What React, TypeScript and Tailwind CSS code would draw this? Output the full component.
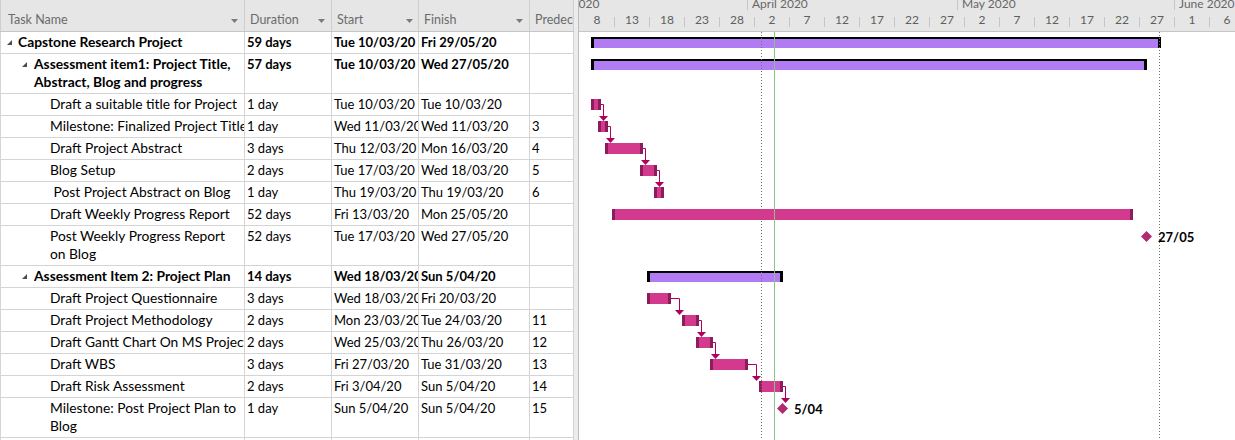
import React from 'react';

type Bar =
  | { kind: 'summary'; s: number; e: number }
  | { kind: 'task'; s: number; e: number }
  | { kind: 'milestone'; e: number; label: string };

type Row = {
  lines: string[];
  lvl: 0 | 1 | 2;
  dur: string;
  start: string;
  finish: string;
  pred: string;
  bold?: boolean;
  bar: Bar;
};

const d = (m: number, day: number) =>
  m === 3 ? day - 8 : m === 4 ? 23 + day : m === 5 ? 53 + day : 84 + day;

const task = (m1: number, d1: number, m2: number, d2: number): Bar => ({ kind: 'task', s: d(m1, d1), e: d(m2, d2) });

const ROWS: Row[] = [
  { lines: ['Capstone Research Project'], lvl: 0, dur: '59 days', start: 'Tue 10/03/20', finish: 'Fri 29/05/20', pred: '', bold: true, bar: { kind: 'summary', s: d(3, 10), e: d(5, 29) } },
  { lines: ['Assessment item1: Project Title,', 'Abstract, Blog and progress'], lvl: 1, dur: '57 days', start: 'Tue 10/03/20', finish: 'Wed 27/05/20', pred: '', bold: true, bar: { kind: 'summary', s: d(3, 10), e: d(5, 27) } },
  { lines: ['Draft a suitable title for Project'], lvl: 2, dur: '1 day', start: 'Tue 10/03/20', finish: 'Tue 10/03/20', pred: '', bar: task(3, 10, 3, 10) },
  { lines: ['Milestone: Finalized Project Title'], lvl: 2, dur: '1 day', start: 'Wed 11/03/20', finish: 'Wed 11/03/20', pred: '3', bar: task(3, 11, 3, 11) },
  { lines: ['Draft Project Abstract'], lvl: 2, dur: '3 days', start: 'Thu 12/03/20', finish: 'Mon 16/03/20', pred: '4', bar: task(3, 12, 3, 16) },
  { lines: ['Blog Setup'], lvl: 2, dur: '2 days', start: 'Tue 17/03/20', finish: 'Wed 18/03/20', pred: '5', bar: task(3, 17, 3, 18) },
  { lines: ['\u00a0Post Project Abstract on Blog'], lvl: 2, dur: '1 day', start: 'Thu 19/03/20', finish: 'Thu 19/03/20', pred: '6', bar: task(3, 19, 3, 19) },
  { lines: ['Draft Weekly Progress Report'], lvl: 2, dur: '52 days', start: 'Fri 13/03/20', finish: 'Mon 25/05/20', pred: '', bar: task(3, 13, 5, 25) },
  { lines: ['Post Weekly Progress Report', 'on Blog'], lvl: 2, dur: '52 days', start: 'Tue 17/03/20', finish: 'Wed 27/05/20', pred: '', bar: { kind: 'milestone', e: d(5, 27), label: '27/05' } },
  { lines: ['Assessment Item 2: Project Plan'], lvl: 1, dur: '14 days', start: 'Wed 18/03/20', finish: 'Sun 5/04/20', pred: '', bold: true, bar: { kind: 'summary', s: d(3, 18), e: d(4, 5) } },
  { lines: ['Draft Project Questionnaire'], lvl: 2, dur: '3 days', start: 'Wed 18/03/20', finish: 'Fri 20/03/20', pred: '', bar: task(3, 18, 3, 20) },
  { lines: ['Draft Project Methodology'], lvl: 2, dur: '2 days', start: 'Mon 23/03/20', finish: 'Tue 24/03/20', pred: '11', bar: task(3, 23, 3, 24) },
  { lines: ['Draft Gantt Chart On MS Project'], lvl: 2, dur: '2 days', start: 'Wed 25/03/20', finish: 'Thu 26/03/20', pred: '12', bar: task(3, 25, 3, 26) },
  { lines: ['Draft WBS'], lvl: 2, dur: '3 days', start: 'Fri 27/03/20', finish: 'Tue 31/03/20', pred: '13', bar: task(3, 27, 3, 31) },
  { lines: ['Draft Risk Assessment'], lvl: 2, dur: '2 days', start: 'Fri 3/04/20', finish: 'Sun 5/04/20', pred: '14', bar: task(4, 3, 4, 5) },
  { lines: ['Milestone: Post Project Plan to', 'Blog'], lvl: 2, dur: '1 day', start: 'Sun 5/04/20', finish: 'Sun 5/04/20', pred: '15', bar: { kind: 'milestone', e: d(4, 5), label: '5/04' } },
];

const LINKS: [number, number][] = [
  [2, 3], [3, 4], [4, 5], [5, 6], [10, 11], [11, 12], [12, 13], [13, 14], [14, 15],
];

const rowH = (r: Row) => (r.lines.length > 1 ? 40 : 22);
const ROW_TOPS: number[] = [];
{
  let y = 0;
  for (const r of ROWS) {
    ROW_TOPS.push(y);
    y += rowH(r);
  }
}

const barLeft = (b: Bar) => (b.kind === 'milestone' ? 7 * (b.e + 1) - 5.5 : 7 * b.s - 2);
const barRight = (b: Bar) => (b.kind === 'milestone' ? 7 * (b.e + 1) + 5.5 : 7 * (b.e + 1) + 1);

const DAY_LABELS = ['8', '13', '18', '23', '28', '2', '7', '12', '17', '22', '27', '2', '7', '12', '17', '22', '27', '1', '6'];

function HeaderArrow() {
  return (
    <svg width="7" height="4" viewBox="0 0 7 4" className="shrink-0">
      <polygon points="0,0 7,0 3.5,4" fill="#7a7a7a" />
    </svg>
  );
}

function Collapse() {
  return (
    <svg width="5" height="5" viewBox="0 0 5 5" className="shrink-0 mt-[7px]">
      <polygon points="5,0 5,5 0,5" fill="#4d4d4d" />
    </svg>
  );
}

function TableHeader() {
  const cell = 'h-full shrink-0 border-r border-[#cfcfcf] flex items-start pt-[12px] leading-[16px] text-[12.5px] text-[#6b6b6b] overflow-hidden whitespace-nowrap';
  return (
    <div className="h-[32px] flex bg-[#e6e6e6] border-b border-[#c6c6c6]">
      <div className={`${cell} w-[245px] border-l pl-[7px] pr-[6px]`}>
        <span>Task Name</span>
        <span className="ml-auto mt-[7px]"><HeaderArrow /></span>
      </div>
      <div className={`${cell} w-[87px] pl-[5px] pr-[6px]`}>
        <span>Duration</span>
        <span className="ml-auto mt-[7px]"><HeaderArrow /></span>
      </div>
      <div className={`${cell} w-[87px] pl-[5px] pr-[5px]`}>
        <span>Start</span>
        <span className="ml-auto mt-[7px]"><HeaderArrow /></span>
      </div>
      <div className={`${cell} w-[111px] pl-[5px] pr-[6px]`}>
        <span>Finish</span>
        <span className="ml-auto mt-[7px]"><HeaderArrow /></span>
      </div>
      <div className={`${cell} w-[44px] pl-[5px]`}>
        <span>Predecessors</span>
      </div>
    </div>
  );
}

function TableRow({ r }: { r: Row }) {
  const h = r.lines.length > 1 ? 'h-[40px]' : 'h-[22px]';
  const weight = r.bold ? 'font-bold' : 'font-normal';
  const cell = `h-full shrink-0 border-r border-[#d4d4d4] overflow-hidden whitespace-nowrap pt-px leading-[18px] text-black ${weight}`;
  const indent = r.lvl === 0 ? 'pl-[6px] gap-[6px]' : r.lvl === 1 ? 'pl-[21px] gap-[7px]' : 'pl-[49px]';
  return (
    <div className={`flex ${h} border-b border-[#d4d4d4]`}>
      <div className={`${cell} w-[245px] border-l text-[13.8px] flex items-start ${indent}`}>
        {r.lvl < 2 && <Collapse />}
        <span>
          {r.lines.map((l, i) => (
            <React.Fragment key={i}>
              {i > 0 && <br />}
              {l}
            </React.Fragment>
          ))}
        </span>
      </div>
      <div className={`${cell} w-[87px] pl-[2px] text-[13px]`}>{r.dur}</div>
      <div className={`${cell} w-[87px] pl-[2px] text-[13px]`}>{r.start}</div>
      <div className={`${cell} w-[111px] pl-[2px] text-[13px]`}>{r.finish}</div>
      <div className={`${cell} w-[44px] pl-[2px] text-[13px]`}>{r.pred}</div>
    </div>
  );
}

function Table() {
  return (
    <div className="w-[574px] shrink-0 h-full flex flex-col bg-white">
      <TableHeader />
      {ROWS.map((r, i) => (
        <TableRow key={i} r={r} />
      ))}
      <div className="flex flex-1">
        <div className="w-[245px] shrink-0 border-l border-r border-[#d4d4d4]" />
        <div className="w-[87px] shrink-0 border-r border-[#d4d4d4]" />
        <div className="w-[87px] shrink-0 border-r border-[#d4d4d4]" />
        <div className="w-[111px] shrink-0 border-r border-[#d4d4d4]" />
        <div className="w-[44px] shrink-0 border-r border-[#d4d4d4]" />
      </div>
    </div>
  );
}

function Timescale() {
  const months = [
    { label: 'March 2020', w: 'w-[217px]' },
    { label: 'April 2020', w: 'w-[210px]' },
    { label: 'May 2020', w: 'w-[217px]' },
    { label: 'June 2020', w: 'w-[210px]' },
  ];
  return (
    <div className="h-[32px] shrink-0 bg-[#e6e6e6] border-b border-[#c6c6c6] overflow-hidden flex flex-col">
      <div className="h-[11px] flex ml-[-49px] shrink-0">
        {months.map((m) => (
          <div key={m.label} className={`${m.w} shrink-0 h-[10px] border-l border-[#c6c6c6] pl-[4px] text-[12px] leading-[7px] text-[#666666] whitespace-nowrap overflow-hidden`}>
            {m.label}
          </div>
        ))}
      </div>
      <div className="h-[20px] flex shrink-0">
        {DAY_LABELS.map((l, k) => (
          <div key={k} className="w-[35px] shrink-0 flex items-start">
            <div className={`w-px h-[10px] mt-[6px] shrink-0 ${k === 0 ? 'bg-transparent' : 'bg-[#c6c6c6]'}`} />
            <div className="flex-1 text-center text-[12px] leading-[18px] text-[#5e5e5e]">{l}</div>
          </div>
        ))}
      </div>
    </div>
  );
}

function BarView({ b }: { b: Bar }) {
  if (b.kind === 'milestone') {
    const c = 7 * (b.e + 1);
    return (
      <>
        <svg width="11" height="11" viewBox="0 0 11 11" className="absolute top-[5px]" style={{ left: c - 5.5 }}>
          <polygon points="5.5,0 11,5.5 5.5,11 0,5.5" fill="#b02b72" />
        </svg>
        <span className="absolute top-[2px] text-[13px] leading-[18px] font-bold text-black" style={{ left: c + 12 }}>
          {b.label}
        </span>
      </>
    );
  }
  const left = barLeft(b);
  const width = barRight(b) - left;
  if (b.kind === 'summary') {
    return (
      <div className="absolute top-[5px] h-[11px] flex" style={{ left, width }}>
        <div className="w-[3px] h-full bg-black shrink-0" />
        <div className="flex-1 flex flex-col">
          <div className="h-[2px] bg-black" />
          <div className="flex-1 bg-[#b07bf3]" />
        </div>
        <div className="w-[3px] h-full bg-black shrink-0" />
      </div>
    );
  }
  return (
    <div className="absolute top-[5px] h-[11px] flex" style={{ left, width }}>
      <div className="w-[3px] h-full bg-[#8c1d5a] shrink-0" />
      <div className="flex-1 bg-[#d3398c]" />
      <div className="w-[3px] h-full bg-[#8c1d5a] shrink-0" />
    </div>
  );
}

function Overlay() {
  const W = 656;
  const H = 408;
  return (
    <svg className="absolute inset-0 pointer-events-none" width={W} height={H} viewBox={`0 0 ${W} ${H}`}>
      <line x1="182.5" y1="0" x2="182.5" y2={H} stroke="#6f6f6f" strokeWidth="1" strokeDasharray="1 2" />
      <line x1="580.5" y1="0" x2="580.5" y2={H} stroke="#6f6f6f" strokeWidth="1" strokeDasharray="1 2" />
      <line x1="195.5" y1="0" x2="195.5" y2={H} stroke="#86c586" strokeWidth="1" />
      {LINKS.map(([a, b], i) => {
        const ba = ROWS[a].bar;
        const bb = ROWS[b].bar;
        const R = barRight(ba);
        const yA = ROW_TOPS[a] + 10;
        const nextStart = barLeft(bb);
        const A = Math.round(Math.max(R + 2, nextStart - 3));
        const T2 = ROW_TOPS[b] + 5;
        return (
          <g key={i}>
            <path d={`M ${R} ${yA + 0.5} H ${A + 0.5} V ${T2 - 5}`} fill="none" stroke="#b0005c" strokeWidth="1" />
            <polygon points={`${A - 4},${T2 - 5} ${A + 5},${T2 - 5} ${A + 0.5},${T2}`} fill="#b0005c" />
          </g>
        );
      })}
    </svg>
  );
}

function Chart() {
  return (
    <div className="flex-1 h-full flex flex-col overflow-hidden">
      <Timescale />
      <div className="relative flex-1 bg-white overflow-hidden">
        {ROWS.map((r, i) => (
          <div key={i} className={`relative ${r.lines.length > 1 ? 'h-[40px]' : 'h-[22px]'}`}>
            <BarView b={r.bar} />
          </div>
        ))}
        <Overlay />
      </div>
    </div>
  );
}

export default function App() {
  return (
    <div className="w-[1235px] h-[440px] overflow-hidden bg-white flex font-[Lato,sans-serif]">
      <Table />
      <div className="w-[5px] shrink-0 h-full bg-[#ececec] border-r border-[#bdbdbd]" />
      <Chart />
    </div>
  );
}
